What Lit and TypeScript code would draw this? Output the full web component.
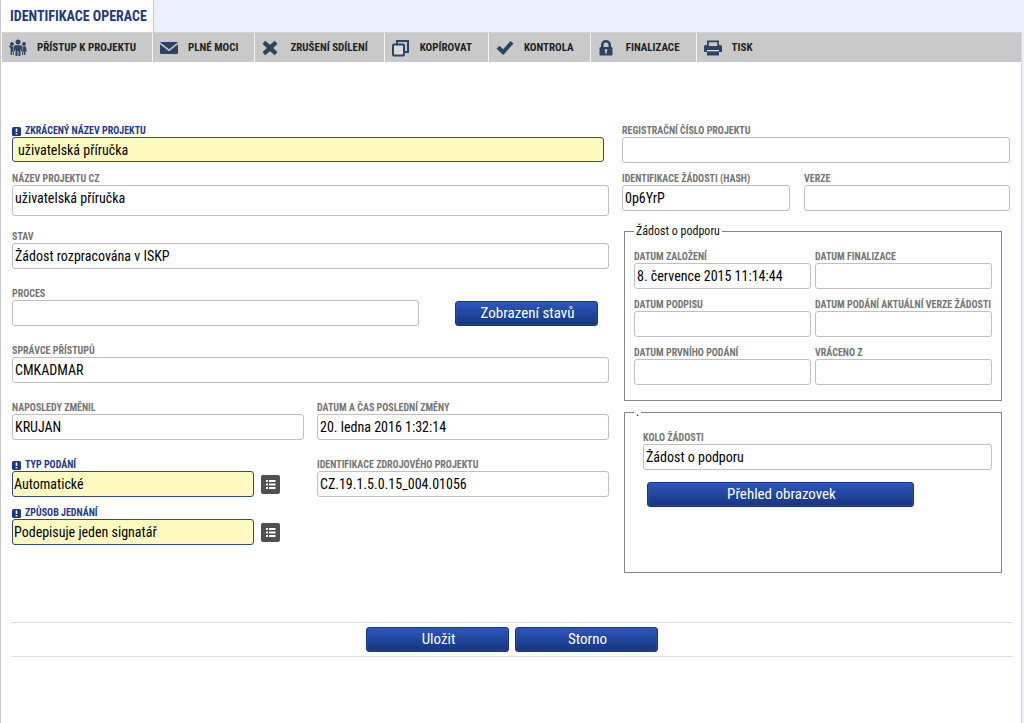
import { LitElement, html, css, svg, nothing } from "lit";
import { customElement, property } from "lit/decorators.js";
import { classMap } from "lit/directives/class-map.js";

const icons: Record<string, unknown> = {
  people: svg`<g fill="#2c4463">
    <circle cx="9" cy="3" r="2.5"/><circle cx="3" cy="5" r="1.9"/><circle cx="15" cy="5" r="1.9"/>
    <path d="M5.500 6.200h7l1.200 5.800-1.300.5-.9-3v7.500H9.500v-4.800h-1V17H6.500V9.500l-.9 3-1.300-.5z"/>
    <path d="M.8 6.200 3 7.600h1.700l-.7 4 .9 1.200V16H3.900v-3.400H3V16H1.600V9.600L0 7.200z"/>
    <path d="M13.300 7.600h3.500l1.200 4.600-1.100.4-.5-2V16H15v-3.400h-.8V16h-1.200v-3.200l.9-1.200z"/></g>`,
  mail: svg`<path fill="#2c4463" d="M0 3.300Q0 3 .5 3h17q.5 0 .5.3L9 10.200zM0 5.200l9 7 9-7V14q0 1-1 1H1q-1 0-1-1z"/>`,
  cross: svg`<path fill="#2c4463" d="m3.200 1.800 4.800 3.900 4.800-3.900 2.600 2.900L11.300 9l4.100 4.300-2.600 2.900L8 12.300l-4.800 3.900-2.600-2.900L4.700 9 .6 4.700z"/>`,
  copy: svg`<g fill="none" stroke="#2c4463" stroke-width="2"><path d="M5 5V2h11v11h-3.500"/><rect x="1" y="5.500" width="11" height="11" rx="1" fill="#dcdcdc"/></g>`,
  check: svg`<path fill="#2c4463" d="m.5 9.800 3-3 3.600 3.400L14.500 2l3 2.600L7.300 16z"/>`,
  lock: svg`<path fill="#2c4463" fill-rule="evenodd" d="M3 8V6a5 5 0 0 1 10 0v2q1.500 0 1.500 1v6.500q0 1-1 1h-11q-1 0-1-1V9q0-1 1.500-1zm2.500 0h5V6a2.500 2.500 0 0 0-5 0zM8 10a1.500 1.500 0 0 0-.8 2.600V14.500h1.600v-1.900A1.500 1.500 0 0 0 8 10z"/>`,
  print: svg`<path fill="#2c4463" fill-rule="evenodd" d="M3 1.500h12V6h1.500q1.500 0 1.500 1.500V13h-3v3.500H3V13H0V7.500Q0 6 1.500 6H3zM4.800 3.200V7h8.400V3.200z"/><path fill="#dcdcdc" d="M3 11h12v1.300H3z"/>`,
};

interface Action {
  icon: string;
  text: string;
}

const actions: Action[] = [
  { icon: "people", text: "PŘÍSTUP K PROJEKTU" },
  { icon: "mail", text: "PLNÉ MOCI" },
  { icon: "cross", text: "ZRUŠENÍ SDÍLENÍ" },
  { icon: "copy", text: "KOPÍROVAT" },
  { icon: "check", text: "KONTROLA" },
  { icon: "lock", text: "FINALIZACE" },
  { icon: "print", text: "TISK" },
];

const FONT = css`"Roboto Condensed", Roboto, sans-serif`;

@customElement("form-field")
class FormField extends LitElement {
  @property() label = "";
  @property() value = "";
  @property({ type: Boolean }) required = false;
  @property({ type: Boolean }) multiline = false;
  @property({ type: Boolean }) indented = false;
  @property({ type: Boolean }) picker = false;

  static styles = css`
    :host {
      display: block;
      min-width: 0;
      font-family: ${FONT};
    }
    .label {
      box-sizing: border-box;
      display: flex;
      align-items: center;
      gap: 4px;
      height: 14px;
      padding-top: 2px;
      font-size: 10px;
      line-height: 12px;
      font-weight: 700;
      color: #757575;
      white-space: nowrap;
    }
    .label.required {
      color: #1c3a8c;
    }
    .mark {
      flex: none;
      width: 9px;
      height: 9px;
    }
    .row {
      display: flex;
      align-items: center;
      gap: 7px;
    }
    .box {
      flex: 1;
      min-width: 0;
      box-sizing: border-box;
      display: block;
      width: 100%;
      height: 26px;
      margin: 0;
      padding: 0 2px;
      border: 1px solid #c0c0c0;
      border-radius: 3px;
      background: #fff;
      color: #000;
      font-family: inherit;
      font-size: 14px;
      line-height: 24px;
      resize: none;
      overflow: hidden;
      outline: none;
    }
    .box.required {
      background: #fffabf;
      border-color: #35477f;
      padding: 0 1px;
    }
    .box.indented {
      height: 25px;
      padding: 0 5px;
    }
    .box.multiline {
      height: 31px;
    }
    .box:focus-visible {
      outline: 1px solid #24418f;
    }
    .pick {
      flex: none;
      display: block;
      width: 19px;
      height: 19px;
      padding: 0;
      border: 0;
      border-radius: 2px;
      background: #505050;
    }
    .pick svg {
      display: block;
    }
  `;

  render() {
    const cls = classMap({
      box: true,
      required: this.required,
      indented: this.indented,
      multiline: this.multiline,
    });
    return html`
      <label class=${classMap({ label: true, required: this.required })} for="box">
        ${this.required
          ? html`<svg class="mark" viewBox="0 0 9 9" aria-hidden="true">
              <rect width="9" height="9" rx="1.500" fill="#18398a" />
              <path d="M3.700 1.500h1.600v3.500H3.700zM3.700 6h1.600v1.500H3.700z" fill="#fff" />
            </svg>`
          : nothing}
        <span>${this.label}</span>
      </label>
      <div class="row">
        ${this.multiline
          ? html`<textarea id="box" class=${cls} .value=${this.value}></textarea>`
          : html`<input id="box" class=${cls} type="text" .value=${this.value} />`}
        ${this.picker
          ? html`<button class="pick" type="button" aria-label="Vybrat">
              <svg width="19" height="19" viewBox="0 0 19 19" fill="#fff">
                <path d="M5 5h2v2H5zM8 5h6.500v2H8zM5 8.500h2v2H5zM8 8.500h6.500v2H8zM5 12h2v2H5zM8 12h6.500v2H8z" />
              </svg>
            </button>`
          : nothing}
      </div>
    `;
  }
}

@customElement("app-root")
class AppRoot extends LitElement {
  static styles = css`
    :host {
      display: block;
      font-family: ${FONT};
      background: #ecf0fc;
    }
    .page {
      box-sizing: border-box;
      min-height: 100vh;
      display: flex;
      flex-direction: column;
      padding-right: 2px;
    }
    .tabs {
      display: flex;
      height: 32px;
    }
    .tab {
      margin: 0;
      padding: 0 6px 0 9px;
      background: #fff;
      border-left: 1px solid #c8c8cc;
      border-right: 1px solid #c8c8cc;
      color: #1f3a85;
      font-size: 14px;
      line-height: 32px;
      font-weight: 700;
    }
    .panel {
      flex: 1;
      background: #fff;
      border-left: 1px solid #c8c8cc;
      border-right: 1px solid #d4d6e4;
    }
    .toolbar {
      display: flex;
      height: 30px;
      background: #c9c9c9;
      border-left: 1px solid #fff;
      border-top: 1px solid #d4d4d4;
      box-sizing: border-box;
    }
    .action {
      display: flex;
      align-items: center;
      gap: 8px;
      padding: 0 16px 0 7px;
      border: 0;
      border-right: 1px solid #f4f4f4;
      background: none;
      color: #222;
      font-family: inherit;
      font-size: 11px;
      font-weight: 700;
      white-space: nowrap;
    }
    .action:last-child {
      border-right: 0;
    }
    .action .icon {
      flex: none;
      width: 20px;
      height: 18px;
    }
    .form {
      display: grid;
      grid-template-columns: minmax(0, 597fr) minmax(0, 388fr);
      column-gap: 13px;
      padding: 61px 11px 49px 11px;
    }
    .left,
    .right {
      display: flex;
      flex-direction: column;
    }
    .left {
      gap: 17px;
    }
    .names {
      display: grid;
      gap: 9px;
      margin-bottom: -4px;
    }
    .short-name {
      margin-right: 5px;
    }
    .process {
      display: flex;
      align-items: flex-end;
      gap: 36px;
      padding-right: 11px;
    }
    .process .field {
      flex: 1;
    }
    .pair {
      display: grid;
      grid-template-columns: 1fr 1fr;
      column-gap: 13px;
      row-gap: 8px;
    }
    .choice {
      padding-right: 24px;
    }
    .right {
      gap: 8px;
    }
    .ids {
      display: grid;
      grid-template-columns: minmax(0, 168fr) minmax(0, 206fr);
      gap: 14px;
    }
    .group {
      box-sizing: border-box;
      min-width: 0;
      margin: 0 8px 0 2px;
      padding: 11px 9px 0;
      border: 1px solid #868686;
      color: #111;
    }
    .group legend {
      padding: 0 2px;
      font-size: 12px;
      line-height: 14px;
    }
    .dates {
      height: 177px;
      margin-top: 5px;
    }
    .date-grid {
      display: grid;
      grid-template-columns: minmax(0, 1fr) minmax(0, 1fr);
      column-gap: 4px;
      row-gap: 8px;
    }
    .round {
      height: 168px;
      margin-top: -4px;
    }
    .round-body {
      padding-left: 9px;
    }
    .overview {
      padding: 12px 78px 0 4px;
    }
    .btn {
      box-sizing: border-box;
      display: block;
      width: 143px;
      height: 25px;
      padding: 0 0 0 2px;
      border: 1px solid #17357f;
      border-radius: 3px;
      background: linear-gradient(#2c57bd, #17357f);
      box-shadow: inset 0 0 0 1px #3a5cae55;
      color: #fff;
      font-family: inherit;
      font-size: 15px;
      line-height: 23px;
    }
    .overview .btn {
      width: 100%;
    }
    .footer {
      display: flex;
      justify-content: center;
      gap: 6px;
      margin: 0 8px 0 10px;
      padding: 4px 0;
      border-top: 1px solid #e0e0e0;
      border-bottom: 1px solid #e0e0e0;
    }
  `;

  render() {
    return html`
      <div class="page">
        <header class="tabs"><h1 class="tab">IDENTIFIKACE OPERACE</h1></header>
        <main class="panel">
          <nav class="toolbar">
            ${actions.map(
              (a) => html`<button class="action" type="button">
                <svg class="icon" viewBox="0 0 20 18" aria-hidden="true">${icons[a.icon]}</svg>
                <span>${a.text}</span>
              </button>`
            )}
          </nav>
          <div class="form">
            <div class="left">
              <div class="names">
                <form-field class="short-name" label="ZKRÁCENÝ NÁZEV PROJEKTU" value="uživatelská příručka" required indented></form-field>
                <form-field label="NÁZEV PROJEKTU CZ" value="uživatelská příručka" multiline></form-field>
              </div>
              <form-field label="STAV" value="Žádost rozpracována v ISKP"></form-field>
              <div class="process">
                <form-field class="field" label="PROCES"></form-field>
                <button class="btn" type="button">Zobrazení stavů</button>
              </div>
              <form-field label="SPRÁVCE PŘÍSTUPŮ" value="CMKADMAR"></form-field>
              <div class="pair">
                <form-field label="NAPOSLEDY ZMĚNIL" value="KRUJAN"></form-field>
                <form-field label="DATUM A ČAS POSLEDNÍ ZMĚNY" value="20. ledna 2016 1:32:14"></form-field>
              </div>
              <div class="pair">
                <form-field class="choice" label="TYP PODÁNÍ" value="Automatické" required picker></form-field>
                <form-field label="IDENTIFIKACE ZDROJOVÉHO PROJEKTU" value="CZ.19.1.5.0.15_004.01056"></form-field>
                <form-field class="choice" label="ZPŮSOB JEDNÁNÍ" value="Podepisuje jeden signatář" required picker></form-field>
              </div>
            </div>
            <div class="right">
              <form-field label="REGISTRAČNÍ ČÍSLO PROJEKTU"></form-field>
              <div class="ids">
                <form-field label="IDENTIFIKACE ŽÁDOSTI (HASH)" value="0p6YrP"></form-field>
                <form-field label="VERZE"></form-field>
              </div>
              <fieldset class="group dates">
                <legend>Žádost o podporu</legend>
                <div class="date-grid">
                  <form-field label="DATUM ZALOŽENÍ" value="8. července 2015 11:14:44"></form-field>
                  <form-field label="DATUM FINALIZACE"></form-field>
                  <form-field label="DATUM PODPISU"></form-field>
                  <form-field label="DATUM PODÁNÍ AKTUÁLNÍ VERZE ŽÁDOSTI"></form-field>
                  <form-field label="DATUM PRVNÍHO PODÁNÍ"></form-field>
                  <form-field label="VRÁCENO Z"></form-field>
                </div>
              </fieldset>
              <fieldset class="group round">
                <legend>.</legend>
                <div class="round-body">
                  <form-field label="KOLO ŽÁDOSTI" value="Žádost o podporu"></form-field>
                  <div class="overview">
                    <button class="btn" type="button">Přehled obrazovek</button>
                  </div>
                </div>
              </fieldset>
            </div>
          </div>
          <footer class="footer">
            <button class="btn" type="button">Uložit</button>
            <button class="btn" type="button">Storno</button>
          </footer>
        </main>
      </div>
    `;
  }
}
